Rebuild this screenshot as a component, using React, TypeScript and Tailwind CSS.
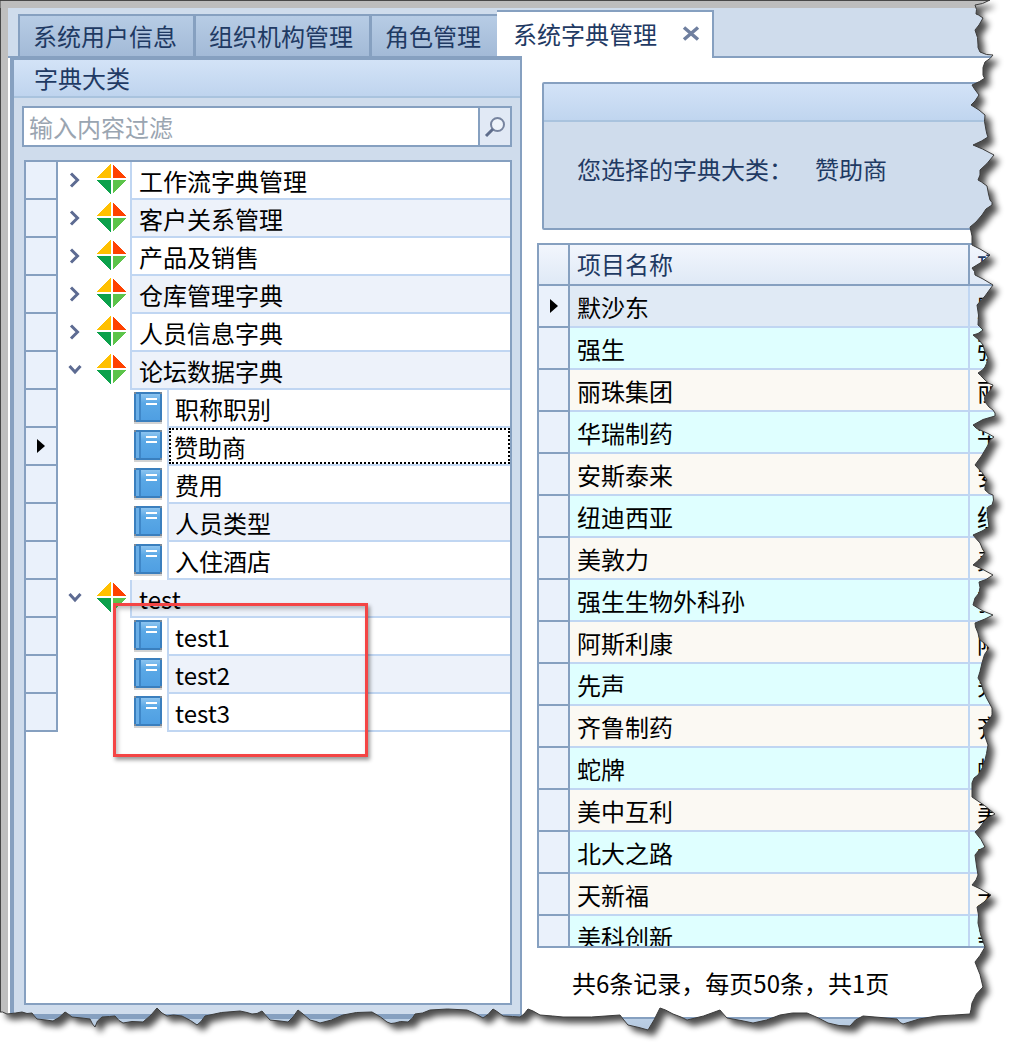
import React from 'react';

const rightEdge: [number, number][] = [
  [990, 0], [975, 5], [976, 14], [983, 18], [975, 30], [978, 45], [980, 52], [993, 55], [985, 62], [983, 75],
  [985, 78], [972, 85], [979, 95], [971, 105], [985, 115], [986, 130], [988, 137], [973, 145], [994, 155],
  [980, 170], [978, 180], [987, 186], [990, 200], [992, 205], [982, 215], [970, 227], [972, 245], [990, 255],
  [972, 268], [975, 275], [993, 285], [977, 305], [978, 325], [983, 330], [973, 335], [983, 345], [988, 358],
  [985, 367], [978, 373], [985, 380], [993, 385], [986, 395], [985, 402], [993, 410], [995, 416], [973, 425],
  [980, 430], [994, 437], [988, 445], [975, 465], [987, 480], [985, 490], [993, 495], [992, 505], [987, 510],
  [989, 527], [973, 535], [980, 543], [985, 553], [973, 565], [993, 575], [979, 582], [979, 593], [973, 605],
  [993, 615], [975, 623], [978, 633], [980, 640], [989, 648], [982, 663], [978, 678], [983, 690], [992, 708],
  [992, 715], [983, 727], [988, 745], [985, 760], [978, 775], [972, 783], [972, 797], [995, 814], [983, 823],
  [975, 832], [985, 847], [975, 855], [978, 875], [972, 885], [991, 895], [977, 907], [978, 923], [985, 947],
  [975, 962], [983, 987], [972, 1003], [970, 1014],
];

const bottomEdge: [number, number][] = [
  [937, 1016], [903, 1024], [897, 1019], [863, 1016], [850, 1026], [828, 1023], [807, 1013], [780, 1015],
  [753, 1023], [727, 1018], [720, 1010], [687, 1020], [673, 1014], [660, 1008], [648, 1030], [628, 1025],
  [620, 1015], [563, 1017], [540, 1015], [528, 1009], [520, 1017], [503, 1016], [493, 1009], [483, 1018],
  [467, 1010], [430, 1010], [415, 1014], [408, 1022], [395, 1023], [387, 1022], [372, 1012], [343, 1015],
  [320, 1023], [310, 1020], [298, 1010], [288, 1022], [270, 1020], [262, 1011], [252, 1014], [240, 1011],
  [205, 1016], [197, 1025], [182, 1016], [167, 1016], [157, 1008], [143, 1022], [123, 1023], [115, 1016],
  [102, 1017], [95, 1027], [90, 1019], [72, 1017], [65, 1012], [53, 1021], [37, 1019], [32, 1013], [22, 1012],
  [7, 1014], [0, 1012],
];

// rough up the edge a little so the tear doesn't look like straight segments
function tornPath() {
  const pts = [...rightEdge, ...bottomEdge];
  let out = 'M0 0L990 0';
  pts.forEach((p, i) => {
    if (i > 0) {
      const q = pts[i - 1];
      const mx = (p[0] + q[0]) / 2 + ((i * 7) % 3) - 1;
      const my = (p[1] + q[1]) / 2 + ((i * 5) % 3) - 1;
      out += `L${mx} ${my}`;
    }
    out += `L${p[0]} ${p[1]}`;
  });
  return out + 'Z';
}

function TornEdge() {
  const d = tornPath();
  return (
    <svg className="absolute inset-0 pointer-events-none" width="1017" height="1051" viewBox="0 0 1017 1051">
      <defs>
        <clipPath id="outside">
          <path d={`M0 0H1017V1051H0Z ${d}`} clipRule="evenodd" />
        </clipPath>
        <filter id="blur" x="-5%" y="-5%" width="110%" height="110%">
          <feGaussianBlur stdDeviation="3" />
        </filter>
      </defs>
      <g clipPath="url(#outside)">
        <rect width="1017" height="1051" fill="#ffffff" />
        <path d={d} fill="#000000" opacity="0.7" transform="translate(6 6)" filter="url(#blur)" />
      </g>
      <path d={d} fill="none" stroke="#3c3c3c" strokeWidth="1" />
    </svg>
  );
}

function FolderIcon() {
  return (
    <svg width="31" height="30" viewBox="0 0 31 30" className="shrink-0" shapeRendering="crispEdges">
      <polygon points="14.5,0 14.5,14 0,14" fill="#ffc000" />
      <polygon points="16.5,0 31,14 16.5,14" fill="#ff4200" />
      <polygon points="0,16 14.5,16 14.5,30" fill="#0ba14b" />
      <polygon points="16.5,16 31,16 16.5,30" fill="#5cc44a" />
    </svg>
  );
}

function BookIcon() {
  return (
    <svg width="28" height="32" viewBox="0 0 28 32" className="shrink-0">
      <defs>
        <linearGradient id="bookFill" x1="0" y1="0" x2="0" y2="1">
          <stop offset="0" stopColor="#8cc4f0" />
          <stop offset="0.35" stopColor="#5aa8e6" />
          <stop offset="1" stopColor="#4f9fe2" />
        </linearGradient>
      </defs>
      <rect x="0" y="28" width="28" height="4" fill="#d2d2d2" />
      <rect x="0" y="0" width="28" height="30" fill="#3a7fbe" />
      <rect x="2" y="2" width="3" height="26" fill="#6aaee6" />
      <rect x="7" y="2" width="19" height="26" fill="url(#bookFill)" />
      <rect x="5" y="2" width="2" height="26" fill="#3f87c8" />
      <rect x="12" y="6" width="11" height="2" fill="#ffffff" />
      <rect x="12" y="11" width="11" height="2" fill="#ffffff" />
      <rect x="0" y="0" width="2" height="2" fill="#7f8a96" />
      <rect x="26" y="0" width="2" height="2" fill="#7f8a96" />
      <rect x="0" y="28" width="2" height="2" fill="#7f8a96" />
      <rect x="26" y="28" width="2" height="2" fill="#7f8a96" />
    </svg>
  );
}

function Chevron({ open }: { open: boolean }) {
  return open ? (
    <svg width="14" height="12" viewBox="0 0 14 12" className="shrink-0">
      <path d="M1.5 2L7 8L12.5 2" fill="none" stroke="#5d6b92" strokeWidth="3" />
    </svg>
  ) : (
    <svg width="14" height="16" viewBox="0 0 14 16" className="shrink-0">
      <path d="M3 1.5L9.5 8L3 14.5" fill="none" stroke="#5d6b92" strokeWidth="3" />
    </svg>
  );
}

function Pointer() {
  return (
    <svg width="8" height="14" viewBox="0 0 8 14">
      <path d="M0 0L8 7L0 14Z" fill="#000000" />
    </svg>
  );
}

const treeRows = [
  { label: '工作流字典管理', level: 0 },
  { label: '客户关系管理', level: 0 },
  { label: '产品及销售', level: 0 },
  { label: '仓库管理字典', level: 0 },
  { label: '人员信息字典', level: 0 },
  { label: '论坛数据字典', level: 0, open: true },
  { label: '职称职别', level: 1 },
  { label: '赞助商', level: 1, focus: true },
  { label: '费用', level: 1 },
  { label: '人员类型', level: 1 },
  { label: '入住酒店', level: 1 },
  { label: 'test', level: 0, open: true },
  { label: 'test1', level: 1 },
  { label: 'test2', level: 1 },
  { label: 'test3', level: 1 },
];

const gridRows = ['默沙东', '强生', '丽珠集团', '华瑞制药', '安斯泰来', '纽迪西亚', '美敦力', '强生生物外科孙', '阿斯利康', '先声', '齐鲁制药', '蛇牌', '美中互利', '北大之路', '天新福', '美科创新'];

function TreeRow({ row, index }: { row: (typeof treeRows)[number]; index: number }) {
  const shaded = index % 2 === 1 && !row.focus;
  return (
    <div className="flex h-[38px]">
      <div className="w-[32px] shrink-0 flex items-center justify-center bg-[#eaf1fb] border-r-2 border-b-2 border-[#86a0c0]">
        {row.focus && <Pointer />}
      </div>
      {row.level === 0 ? (
        <div className="w-[72px] shrink-0 flex items-start pl-[10px]">
          <div className="w-[16px] h-[36px] flex items-center shrink-0"><Chevron open={!!row.open} /></div>
          <div className="ml-[12px] mt-[2px]"><FolderIcon /></div>
        </div>
      ) : (
        <div className="w-[109px] shrink-0 pl-[76px] pt-[2px]"><BookIcon /></div>
      )}
      <div className={`flex-1 min-w-0 border-l-2 border-b-2 border-[#c0d6f2] ${shaded ? 'bg-[#edf2fa]' : 'bg-white'}`}>
        <div className={`h-full flex items-center pt-[2px] text-black text-[24px] ${row.focus ? 'border-2 border-dotted border-black pl-[3px]' : row.level === 0 ? 'pl-[7px]' : 'pl-[6px]'}`}>
          {row.label}
        </div>
      </div>
    </div>
  );
}

function GridRow({ name, index }: { name: string; index: number }) {
  const bg = index === 0 ? 'bg-[#e0eaf5]' : index % 2 === 1 ? 'bg-[#dfffff]' : 'bg-[#fbf9f3]';
  return (
    <div className="flex h-[42px] shrink-0">
      <div className="w-[31px] shrink-0 flex items-center justify-center bg-[#eaf1fb] border-r-2 border-b-2 border-[#86a0c0]">
        {index === 0 && <Pointer />}
      </div>
      <div className={`w-[400px] shrink-0 flex items-center pl-[7px] pt-[2px] text-[24px] text-black border-r-2 border-b-2 border-[#c0d6f2] ${bg}`}>{name}</div>
      <div className={`flex-1 flex items-center pl-[7px] pt-[2px] text-[24px] text-black whitespace-nowrap border-b-2 border-[#c0d6f2] ${bg}`}>{name}</div>
    </div>
  );
}

export default function App() {
  return (
    <div className="relative w-[1017px] h-[1051px] overflow-hidden flex flex-col bg-white font-['Noto_Sans_CJK_SC','Noto_Sans',sans-serif]">
      <div className="h-[8px] shrink-0 bg-[#bdbdbd] border-t border-[#555555]" />
      <div className="flex flex-1 min-h-0">
        <div className="w-[8px] shrink-0 bg-[#bfbfbf] border-l border-[#555555]" />
        <div className="flex-1 min-w-0 flex flex-col">
          {/* tabs */}
          <div className="h-[50px] shrink-0 flex items-end pl-[10px] bg-[#cfdcec] border-b-2 border-[#86a0c0] text-[24px] text-[#1f3a63]">
            <div className="w-[178px] h-[42px] flex items-center pl-[13px] bg-gradient-to-b from-[#b7cce5] to-[#a3bad7] border-l-2 border-t-2 border-r-[3px] border-[#86a0c0]">系统用户信息</div>
            <div className="w-[176px] h-[42px] flex items-center pl-[13px] bg-gradient-to-b from-[#b7cce5] to-[#a3bad7] border-t-2 border-r-[3px] border-[#86a0c0]">组织机构管理</div>
            <div className="w-[125px] h-[42px] flex items-center pl-[13px] bg-gradient-to-b from-[#b7cce5] to-[#a3bad7] border-t-2 border-[#86a0c0]">角色管理</div>
            <div className="w-[217px] h-[48px] -mb-[2px] relative flex items-center pl-[16px] pb-[2px] bg-white border-t-2 border-r-2 border-[#86a0c0]">
              系统字典管理
              <svg className="absolute left-[185px] top-[14px]" width="18" height="15" viewBox="0 0 18 15">
                <path d="M2 1.5L16 13.5M16 1.5L2 13.5" stroke="#6f7f9f" strokeWidth="3.5" />
              </svg>
            </div>
          </div>

          <div className="flex-1 min-h-0 flex bg-white">
            {/* left panel */}
            <div className="relative ml-[2px] -mt-[2px] w-[512px] shrink-0 flex flex-col bg-[#cfdcec] border-l-4 border-t-4 border-r-2 border-b-[3px] border-[#86a0c0]">
              <div className="h-[38px] shrink-0 flex items-center pl-[20px] text-[24px] text-[#1f3a63] bg-gradient-to-b from-[#d3e3f7] to-[#bfd4ee] border-b-2 border-[#a9c3de]">字典大类</div>
              <div className="flex-1 min-h-0 flex flex-col pl-[8px] pr-[8px] pt-[8px] pb-[9px]">
                <div className="h-[41px] shrink-0 flex bg-white border-2 border-[#86a0c0]">
                  <input readOnly placeholder="输入内容过滤" className="flex-1 min-w-0 pl-[5px] text-[24px] outline-none placeholder:text-[#9aa5b1]" />
                  <div className="w-[32px] shrink-0 flex items-center justify-center bg-[#e1e9f5] border-l-2 border-[#86a0c0]">
                    <svg width="22" height="22" viewBox="0 0 22 22">
                      <circle cx="13.5" cy="8.5" r="6.5" fill="#eef3fa" stroke="#77849f" strokeWidth="2" />
                      <path d="M9 13L2 20" stroke="#5f6d8c" strokeWidth="3" />
                    </svg>
                  </div>
                </div>
                <div className="mt-[13px] ml-[2px] flex-1 min-h-0 bg-white border-2 border-[#86a0c0] border-r-2">
                  {treeRows.map((row, i) => (
                    <TreeRow key={row.label} row={row} index={i} />
                  ))}
                </div>
              </div>
            </div>

            {/* right side */}
            <div className="flex-1 min-w-0 flex flex-col overflow-hidden">
              <div className="mt-[24px] ml-[20px] w-[470px] h-[148px] shrink-0 flex flex-col bg-[#cfdcec] border-2 border-[#86a0c0] rounded-[2px]">
                <div className="h-[38px] shrink-0 bg-gradient-to-b from-[#d3e3f7] to-[#c0d5ef] border-b-2 border-[#a9c3de]" />
                <div className="flex-1 flex items-center gap-[22px] pl-[33px] pb-[12px] text-[24px] text-[#1f3a63]">
                  <span>您选择的字典大类：</span>
                  <span>赞助商</span>
                </div>
              </div>
              <div className="mt-[13px] ml-[15px] w-[480px] h-[705px] shrink-0 flex flex-col overflow-hidden bg-white border-2 border-[#86a0c0]">
                <div className="h-[41px] shrink-0 flex text-[24px] text-[#1f3a63] bg-gradient-to-b from-[#f2f6fd] to-[#dfe9f6] border-b-2 border-[#86a0c0]">
                  <div className="w-[31px] shrink-0 border-r-2 border-[#86a0c0]" />
                  <div className="w-[400px] shrink-0 flex items-center pl-[7px] pb-[2px] border-r-2 border-[#86a0c0]">项目名称</div>
                  <div className="flex-1 flex items-center pl-[7px] pb-[2px] whitespace-nowrap">项目值</div>
                </div>
                {gridRows.map((name, i) => (
                  <GridRow key={name} name={name} index={i} />
                ))}
              </div>
              <div className="flex-1 min-h-0 flex items-center pl-[50px] text-[24px] text-black">共6条记录，每页50条，共1页</div>
            </div>
          </div>

          <div className="h-[34px] shrink-0 bg-gradient-to-b from-[#bcd0e6] to-[#a9bad0] border-t-2 border-[#86a0c0]" />
        </div>
      </div>

      {/* red highlight box */}
      <div className="absolute left-[113px] top-[603px] w-[255px] h-[154px] border-[3px] border-[#f44545] shadow-[2px_3px_4px_rgba(0,0,0,0.4),inset_2px_3px_4px_rgba(0,0,0,0.25)]" />

      <TornEdge />
    </div>
  );
}
